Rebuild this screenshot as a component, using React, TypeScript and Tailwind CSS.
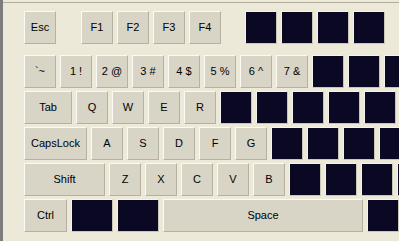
import React from "react";

type K = { label?: string; w?: number; dark?: boolean };

const Key = ({ label, w = 32, dark }: K) => {
    if (dark) {
        return (
            <div
                className="h-[33px] shrink-0 border border-t-[#f4f3ee] border-l-[#f4f3ee] border-r-[#c9c6b8] border-b-[#c9c6b8] bg-[#0a0822]"
                style={{ width: w }}
            />
        );
    }
    return (
        <div
            className="flex h-[33px] shrink-0 items-center justify-center border border-t-[#fbfaf6] border-l-[#fbfaf6] border-r-[#b4b0a2] border-b-[#b4b0a2] bg-[#d8d5c7] text-[11px] text-black"
            style={{ width: w }}
        >
            {label}
        </div>
    );
};

const App = () => {
    return (
        <div className="h-[241px] w-[399px] overflow-hidden border-l-[3px] border-l-[#7c7c7c] bg-[#ece9d8] font-['Liberation_Sans',Arial,sans-serif]">
            <div className="mt-[2px] h-[239px] border-t border-t-[#b0ad9f] pl-[21px] pt-[8px]">
                {/* function row */}
                <div className="flex">
                    <Key label="Esc" />
                    <div className="flex gap-[4px] pl-[25px]">
                        <Key label="F1" />
                        <Key label="F2" />
                        <Key label="F3" />
                        <Key label="F4" />
                    </div>
                    <div className="flex gap-[4px] pl-[24px]">
                        <Key dark />
                        <Key dark />
                        <Key dark />
                        <Key dark />
                    </div>
                </div>

                <div className="mt-[11px] flex flex-col gap-[3px]">
                    <div className="flex gap-[4px]">
                        <Key label="`~" />
                        <Key label="1 !" />
                        <Key label="2 @" />
                        <Key label="3 #" />
                        <Key label="4 $" />
                        <Key label="5 %" />
                        <Key label="6 ^" />
                        <Key label="7 &" />
                        <Key dark />
                        <Key dark />
                        <Key dark />
                    </div>

                    <div className="flex gap-[4px]">
                        <Key label="Tab" w={48} />
                        <Key label="Q" />
                        <Key label="W" />
                        <Key label="E" />
                        <Key label="R" />
                        <Key dark />
                        <Key dark />
                        <Key dark />
                        <Key dark />
                        <Key dark />
                    </div>

                    <div className="flex gap-[4px]">
                        <Key label="CapsLock" w={63} />
                        <Key label="A" />
                        <Key label="S" />
                        <Key label="D" />
                        <Key label="F" />
                        <Key label="G" />
                        <Key dark />
                        <Key dark />
                        <Key dark />
                        <Key dark />
                    </div>

                    <div className="flex gap-[4px]">
                        <Key label="Shift" w={81} />
                        <Key label="Z" />
                        <Key label="X" />
                        <Key label="C" />
                        <Key label="V" />
                        <Key label="B" />
                        <Key dark />
                        <Key dark />
                        <Key dark />
                        <Key dark />
                    </div>

                    <div className="flex gap-[4px]">
                        <Key label="Ctrl" w={43} />
                        <Key dark w={42} />
                        <Key dark w={42} />
                        <Key label="Space" w={200} />
                        <Key dark />
                    </div>
                </div>
            </div>
        </div>
    );
};

export default App;
